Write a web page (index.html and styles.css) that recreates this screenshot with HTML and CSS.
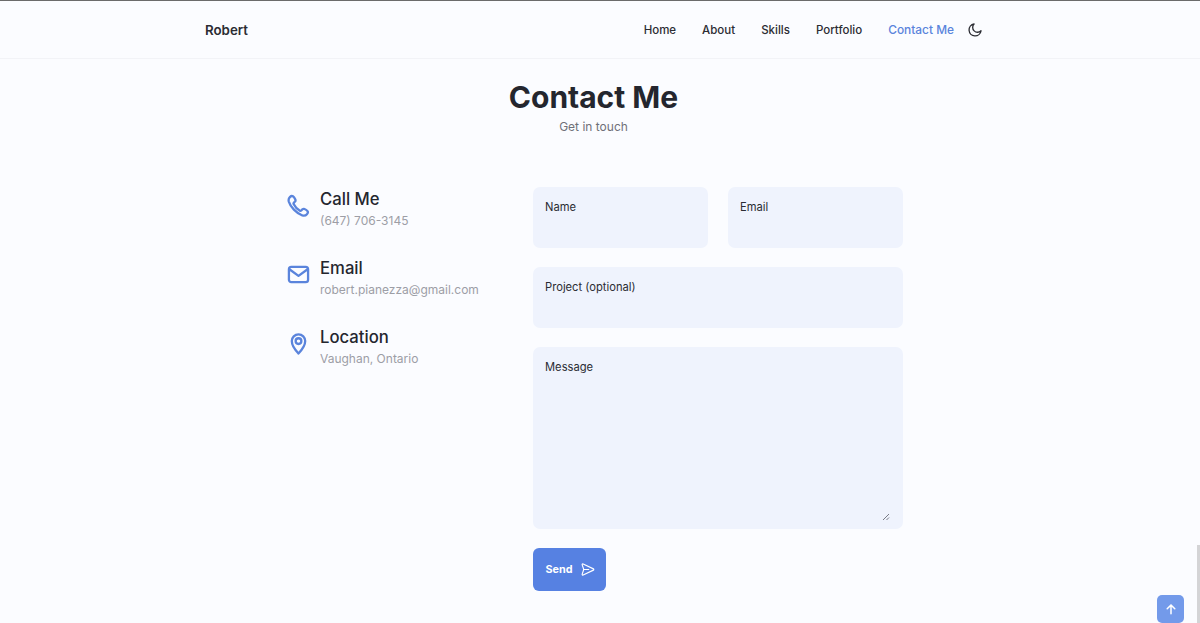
FILE: index.html
```html
<!DOCTYPE html>
<html lang="en">
<head>
    <meta charset="UTF-8">
    <meta name="viewport" content="width=device-width, initial-scale=1.0">
    <title>Robert</title>
    <link rel="stylesheet" href="styles.css">
</head>
<body>
    <header class="header">
        <nav class="nav">
            <a class="nav-logo" href="#">Robert</a>
            <div class="nav-menu">
                <a class="nav-link" href="#">Home</a>
                <a class="nav-link" href="#">About</a>
                <a class="nav-link" href="#">Skills</a>
                <a class="nav-link" href="#">Portfolio</a>
                <a class="nav-link active-link" href="#">Contact Me</a>
                <svg class="theme-icon" viewBox="0 0 24 24" fill="none" stroke="currentColor" stroke-width="2" stroke-linecap="round" stroke-linejoin="round">
                    <path d="M21 13.2A9 9 0 1 1 10.6 3a7.2 7.2 0 0 0 10.4 10.2z"/>
                </svg>
            </div>
        </nav>
    </header>

    <main class="section">
        <h1 class="section-title">Contact Me</h1>
        <span class="section-subtitle">Get in touch</span>

        <div class="contact-container">
            <div class="contact-info">
                <div class="contact-item">
                    <svg class="contact-icon" viewBox="0 0 24 24" fill="none" stroke="currentColor" stroke-width="2.400" stroke-linecap="round" stroke-linejoin="round">
                        <path d="M3 3.2c1-1 2.2-1.4 3.2-.8.9.6 2 2.300 2.500 3.400.4.900.1 1.700-.5 2.300l-1.100 1c-.4.400-.4.900-.2 1.400 1.300 2.700 3.800 5.400 6.600 6.900.5.300 1 .2 1.400-.2l1.100-1.100c.7-.6 1.500-.8 2.300-.4 1.100.5 2.500 1.400 3.100 2.200.7.900.3 2.200-.6 3.200-1.300 1.500-3 1.800-4.800 1.300C9.500 19.700 3.700 13.700 1.900 7.900 1.400 6.100 1.700 4.500 3 3.200z"/>
                    </svg>
                    <div>
                        <h3 class="contact-title">Call Me</h3>
                        <span class="contact-subtitle">(647) 706-3145</span>
                    </div>
                </div>
                <div class="contact-item">
                    <svg class="contact-icon" viewBox="0 0 24 24" fill="none" stroke="currentColor" stroke-width="2.400" stroke-linecap="round" stroke-linejoin="round">
                        <rect x="2" y="4" width="20" height="16" rx="2.500"/>
                        <path d="M2.500 6.500l9.500 7 9.500-7"/>
                    </svg>
                    <div>
                        <h3 class="contact-title">Email</h3>
                        <span class="contact-subtitle">robert.pianezza@gmail.com</span>
                    </div>
                </div>
                <div class="contact-item">
                    <svg class="contact-icon" viewBox="0 0 24 24" fill="none" stroke="currentColor" stroke-width="2.400" stroke-linecap="round" stroke-linejoin="round">
                        <path d="M12 22.500s-7-7.300-7-13a7 7 0 0 1 14 0c0 5.700-7 13-7 13z"/>
                        <circle cx="12" cy="9.500" r="3"/>
                    </svg>
                    <div>
                        <h3 class="contact-title">Location</h3>
                        <span class="contact-subtitle">Vaughan, Ontario</span>
                    </div>
                </div>
            </div>

            <form class="contact-form">
                <div class="form-row">
                    <div class="field">
                        <label class="field-label">Name</label>
                    </div>
                    <div class="field">
                        <label class="field-label">Email</label>
                    </div>
                </div>
                <div class="field">
                    <label class="field-label">Project (optional)</label>
                </div>
                <div class="field field-message">
                    <label class="field-label">Message</label>
                    <svg class="resize-grip" viewBox="0 0 8 8" fill="none" stroke="#6b6d78" stroke-width="0.9">
                        <path d="M1 7l6-6M4.500 7l2.500-2.500"/>
                    </svg>
                </div>
                <button class="send-button" type="button">
                    Send
                    <svg class="send-icon" viewBox="0 0 24 24" fill="none" stroke="currentColor" stroke-width="1.800" stroke-linecap="round" stroke-linejoin="round">
                        <path d="M3.500 4.500c-.3-1 .6-1.800 1.600-1.400L21.500 11c.8.400.8 1.600 0 2L5.100 20.900c-1 .4-1.900-.4-1.600-1.400L6 12z"/>
                        <path d="M6 12h8"/>
                    </svg>
                </button>
            </form>
        </div>
    </main>

    <a class="scroll-up" href="#">
        <svg viewBox="0 0 24 24" fill="none" stroke="currentColor" stroke-width="2.600" stroke-linecap="round" stroke-linejoin="round">
            <path d="M12 20V5M5.500 11.500L12 5l6.500 6.500"/>
        </svg>
    </a>
    <div class="scroll-thumb"></div>
</body>
</html>
```

FILE: styles.css
```css
* {
    box-sizing: border-box;
}

html, body {
    height: 100%;
}

body {
    margin: 0;
    height: 623px;
    overflow: hidden;
    background-color: #fbfcff;
    color: #24262e;
    font-family: Inter, 'Noto Sans', sans-serif;
    border-top: 1px solid #6b6b6b;
    padding-right: 13px;
}

a {
    text-decoration: none;
    color: inherit;
}

.header {
    margin-right: -13px;
    height: 58px;
    border-bottom: 1px solid #f2f3f7;
    padding-right: 12px;
}

.nav {
    width: 778px;
    height: 100%;
    margin: 0 auto;
    display: flex;
    align-items: center;
    justify-content: space-between;
}

.nav-logo {
    font-size: 13.300px;
    font-weight: 600;
    color: #2b2c33;
}

.nav-menu {
    display: flex;
    align-items: center;
    gap: 26px;
}

.nav-link {
    font-size: 11.500px;
    font-weight: 500;
    color: #2b2c33;
}

.active-link {
    font-size: 11.900px;
    color: #5a84dc;
}

.theme-icon {
    width: 16px;
    height: 16px;
    margin-left: -13px;
    color: #2b2c33;
}

.section {
    display: flex;
    flex-direction: column;
    align-items: center;
}

.section-title {
    margin: 20px 0 0;
    font-size: 30px;
    line-height: 36px;
    font-weight: 700;
    color: #24262e;
}

.section-subtitle {
    margin-top: 4px;
    font-size: 12px;
    line-height: 16px;
    color: #6f7078;
}

.contact-container {
    width: 616px;
    margin: 52px 0 0 3px;
    display: grid;
    grid-template-columns: 246px 370px;
}

.contact-info {
    display: flex;
    flex-direction: column;
    gap: 24px;
    padding-top: 2px;
}

.contact-item {
    display: flex;
    gap: 10px;
    height: 45px;
}

.contact-icon {
    width: 23px;
    height: 23px;
    margin-top: 5px;
    color: #5a84dc;
}

.contact-title {
    margin: 0;
    font-size: 16.700px;
    line-height: 20px;
    font-weight: 500;
    color: #24262e;
}

.contact-subtitle {
    display: block;
    margin-top: 4px;
    font-size: 12px;
    line-height: 16px;
    color: #9d9ea6;
}

.contact-form {
    display: flex;
    flex-direction: column;
    gap: 19px;
}

.form-row {
    display: grid;
    grid-template-columns: 175px 175px;
    gap: 20px;
}

.field {
    position: relative;
    height: 61px;
    padding: 12px;
    background-color: #eff3fd;
    border-radius: 7px;
}

.field-message {
    height: 182px;
}

.field-label {
    display: block;
    font-size: 11.200px;
    line-height: 16px;
    color: #2b2c33;
}

.resize-grip {
    position: absolute;
    right: 13px;
    bottom: 8px;
    width: 8px;
    height: 8px;
}

.send-button {
    width: 73px;
    height: 43px;
    display: flex;
    align-items: center;
    justify-content: center;
    gap: 7px;
    padding: 0 0 0 1px;
    border: none;
    border-radius: 6px;
    background-color: #5681e2;
    color: #ffffff;
    font-family: inherit;
    font-size: 10.800px;
    font-weight: 700;
}

.send-icon {
    width: 15px;
    height: 15px;
}

.scroll-up {
    position: fixed;
    right: 16px;
    bottom: 0;
    width: 27px;
    height: 28px;
    display: flex;
    align-items: center;
    justify-content: center;
    background-color: #739aea;
    border-radius: 5px;
    color: #ffffff;
}

.scroll-up svg {
    width: 14px;
    height: 14px;
}

.scroll-thumb {
    position: fixed;
    top: 545px;
    right: 0;
    width: 3px;
    bottom: 0;
    background-color: #d4d4d6;
}
```
